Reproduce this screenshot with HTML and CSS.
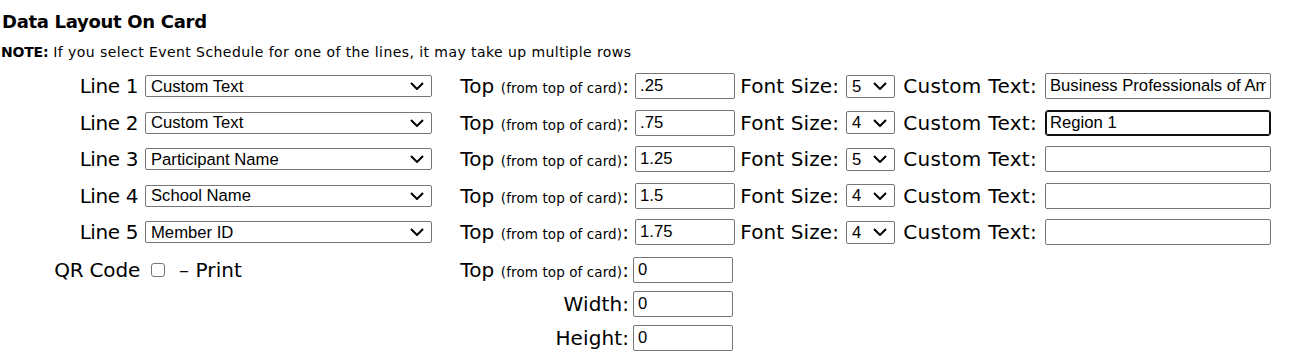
FILE: index.html
```html
<!DOCTYPE html>
<html lang="en">
<head>
<meta charset="UTF-8">
<title>Data Layout On Card</title>
<link rel="stylesheet" href="styles.css">
</head>
<body>

<div class="card-layout">
  <h3>Data Layout On Card</h3>
  <p class="note"><strong>NOTE:</strong> If you select Event Schedule for one of the lines, it may take up multiple rows</p>

  <!-- one row per printed line -->
  <div class="line-row">
    <label class="line-name">Line 1</label>
    <span class="select-wrap data-wrap">
      <select class="data-select">
        <option selected>Custom Text</option>
        <option>Participant Name</option>
        <option>School Name</option>
        <option>Member ID</option>
        <option>Event Schedule</option>
      </select>
      <svg class="chevron" width="14" height="8" viewBox="0 0 14 8"><path d="M1 1 L7 7 L13 1" fill="none" stroke="#000" stroke-width="2"/></svg>
    </span>
    <span class="top-label">Top <small>(from top of card)</small>:</span>
    <input type="text" class="top-input" value=".25">
    <span class="size-label">Font Size:</span>
    <span class="select-wrap size-wrap">
      <select class="size-select"><option>3</option><option>4</option><option selected>5</option><option>6</option></select>
      <svg class="chevron" width="14" height="8" viewBox="0 0 14 8"><path d="M1 1 L7 7 L13 1" fill="none" stroke="#000" stroke-width="2"/></svg>
    </span>
    <span class="custom-label">Custom Text:</span>
    <input type="text" class="custom-input" value="Business Professionals of America">
  </div>

  <div class="line-row">
    <label class="line-name">Line 2</label>
    <span class="select-wrap data-wrap">
      <select class="data-select">
        <option selected>Custom Text</option>
        <option>Participant Name</option>
        <option>School Name</option>
        <option>Member ID</option>
      </select>
      <svg class="chevron" width="14" height="8" viewBox="0 0 14 8"><path d="M1 1 L7 7 L13 1" fill="none" stroke="#000" stroke-width="2"/></svg>
    </span>
    <span class="top-label">Top <small>(from top of card)</small>:</span>
    <input type="text" class="top-input" value=".75">
    <span class="size-label">Font Size:</span>
    <span class="select-wrap size-wrap">
      <select class="size-select"><option>3</option><option selected>4</option><option>5</option><option>6</option></select>
      <svg class="chevron" width="14" height="8" viewBox="0 0 14 8"><path d="M1 1 L7 7 L13 1" fill="none" stroke="#000" stroke-width="2"/></svg>
    </span>
    <span class="custom-label">Custom Text:</span>
    <input type="text" class="custom-input focused" value="Region 1">
  </div>

  <div class="line-row">
    <label class="line-name">Line 3</label>
    <span class="select-wrap data-wrap">
      <select class="data-select">
        <option>Custom Text</option>
        <option selected>Participant Name</option>
        <option>School Name</option>
        <option>Member ID</option>
      </select>
      <svg class="chevron" width="14" height="8" viewBox="0 0 14 8"><path d="M1 1 L7 7 L13 1" fill="none" stroke="#000" stroke-width="2"/></svg>
    </span>
    <span class="top-label">Top <small>(from top of card)</small>:</span>
    <input type="text" class="top-input" value="1.25">
    <span class="size-label">Font Size:</span>
    <span class="select-wrap size-wrap">
      <select class="size-select"><option>3</option><option>4</option><option selected>5</option><option>6</option></select>
      <svg class="chevron" width="14" height="8" viewBox="0 0 14 8"><path d="M1 1 L7 7 L13 1" fill="none" stroke="#000" stroke-width="2"/></svg>
    </span>
    <span class="custom-label">Custom Text:</span>
    <input type="text" class="custom-input" value="">
  </div>

  <div class="line-row">
    <label class="line-name">Line 4</label>
    <span class="select-wrap data-wrap">
      <select class="data-select">
        <option>Custom Text</option>
        <option>Participant Name</option>
        <option selected>School Name</option>
        <option>Member ID</option>
      </select>
      <svg class="chevron" width="14" height="8" viewBox="0 0 14 8"><path d="M1 1 L7 7 L13 1" fill="none" stroke="#000" stroke-width="2"/></svg>
    </span>
    <span class="top-label">Top <small>(from top of card)</small>:</span>
    <input type="text" class="top-input" value="1.5">
    <span class="size-label">Font Size:</span>
    <span class="select-wrap size-wrap">
      <select class="size-select"><option>3</option><option selected>4</option><option>5</option><option>6</option></select>
      <svg class="chevron" width="14" height="8" viewBox="0 0 14 8"><path d="M1 1 L7 7 L13 1" fill="none" stroke="#000" stroke-width="2"/></svg>
    </span>
    <span class="custom-label">Custom Text:</span>
    <input type="text" class="custom-input" value="">
  </div>

  <div class="line-row">
    <label class="line-name">Line 5</label>
    <span class="select-wrap data-wrap">
      <select class="data-select">
        <option>Custom Text</option>
        <option>Participant Name</option>
        <option>School Name</option>
        <option selected>Member ID</option>
      </select>
      <svg class="chevron" width="14" height="8" viewBox="0 0 14 8"><path d="M1 1 L7 7 L13 1" fill="none" stroke="#000" stroke-width="2"/></svg>
    </span>
    <span class="top-label">Top <small>(from top of card)</small>:</span>
    <input type="text" class="top-input" value="1.75">
    <span class="size-label">Font Size:</span>
    <span class="select-wrap size-wrap">
      <select class="size-select"><option>3</option><option selected>4</option><option>5</option><option>6</option></select>
      <svg class="chevron" width="14" height="8" viewBox="0 0 14 8"><path d="M1 1 L7 7 L13 1" fill="none" stroke="#000" stroke-width="2"/></svg>
    </span>
    <span class="custom-label">Custom Text:</span>
    <input type="text" class="custom-input" value="">
  </div>

  <!-- QR code position -->
  <div class="qr-block">
    <div class="qr-left">
      <span class="qr-name">QR Code</span>
      <input type="checkbox" class="qr-check">
      <span class="qr-print">&ndash; Print</span>
    </div>
    <div class="qr-dims">
      <div class="dim-row">
        <span class="dim-label">Top <small>(from top of card)</small>:</span>
        <input type="text" class="dim-input" value="0">
      </div>
      <div class="dim-row">
        <span class="dim-label">Width:</span>
        <input type="text" class="dim-input" value="0">
      </div>
      <div class="dim-row">
        <span class="dim-label">Height:</span>
        <input type="text" class="dim-input" value="0">
      </div>
    </div>
  </div>
</div>

</body>
</html>
```

FILE: styles.css
```css
body {
  margin: 0;
  background-color: #fff;
  color: #000;
  font-family: "DejaVu Sans", sans-serif;
}

.card-layout {
  padding-left: 2px;
}

h3 {
  margin: 11px 0 0 0;
  font-size: 18px;
  line-height: 22px;
  letter-spacing: -0.3px;
  font-weight: bold;
}

.note {
  margin: 9px 0 0 -1px;
  font-size: 14px;
  line-height: 20px;
  letter-spacing: 0.43px;
}

.note strong {
  font-weight: bold;
  letter-spacing: -0.2px;
}

/* line rows */
.line-row {
  display: flex;
  align-items: center;
  height: 36.5px;
  margin-left: -2px;
  font-size: 20px;
  letter-spacing: 0.1px;
}

.card-layout .line-row:first-of-type {
  margin-top: 6px;
}

.line-name {
  width: 138px;
  margin-right: 7px;
  text-align: right;
  letter-spacing: -0.4px;
}

.top-label,
.size-label,
.custom-label,
.dim-label {
  text-align: right;
  white-space: nowrap;
}

.top-label {
  width: 197px;
  padding-right: 6px;
}

.size-label {
  width: 104px;
  padding-right: 7px;
}

.custom-label {
  width: 142px;
  padding-right: 8px;
  letter-spacing: 0.3px;
}

small {
  font-size: 13.5px;
  letter-spacing: 0.1px;
}

select,
input[type="text"] {
  box-sizing: border-box;
  margin: 0;
  font-family: "Liberation Sans", Arial, sans-serif;
  font-size: 16.67px;
  color: #000;
  background-color: #fff;
  border: 1px solid #767676;
  border-radius: 2px;
}

/* selects get their own chevron laid over the right end */
.select-wrap {
  position: relative;
  display: flex;
}

select {
  -webkit-appearance: none;
  appearance: none;
  padding: 0 24px 0 5px;
}

.chevron {
  position: absolute;
  top: 50%;
  right: 8px;
  margin-top: -4px;
  pointer-events: none;
}

.data-select {
  width: 287px;
  height: 22px;
}

.size-select {
  width: 49px;
  height: 23px;
}

input[type="text"] {
  height: 26px;
  padding: 1px 4px;
}

.top-input,
.dim-input {
  width: 100px;
}

.custom-input {
  width: 226px;
}

.custom-input.focused {
  border-color: #101010;
  box-shadow: inset 0 0 0 1px #101010;
  border-radius: 3px;
}

/* QR code block */
.qr-block {
  display: flex;
  align-items: flex-start;
  margin-left: -2px;
  margin-top: 2.5px;
  font-size: 20px;
  letter-spacing: 0.1px;
}

.qr-left {
  display: flex;
  align-items: center;
  width: 432px;
  height: 34px;
}

.qr-name {
  width: 140px;
  text-align: right;
  letter-spacing: -0.2px;
}

.qr-check {
  -webkit-appearance: none;
  appearance: none;
  flex: none;
  box-sizing: border-box;
  width: 14px;
  height: 14px;
  margin: 0 0 0 11px;
  border: 1px solid #767676;
  border-radius: 3px;
  background-color: #fff;
}

.qr-print {
  margin-left: 14px;
}

.dim-row {
  display: flex;
  align-items: center;
  height: 34px;
}

.dim-label {
  width: 197px;
  padding-right: 4px;
}
```
